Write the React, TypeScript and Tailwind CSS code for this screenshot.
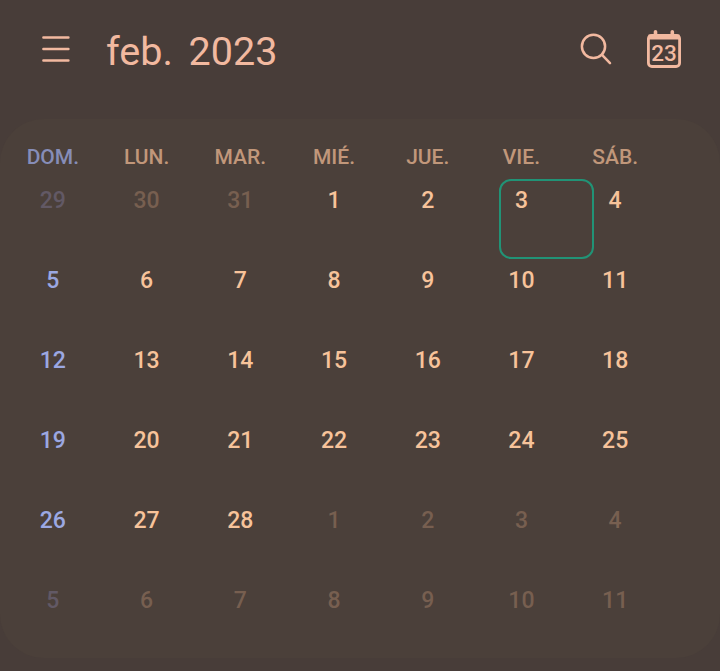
const weekdays = ['DOM.', 'LUN.', 'MAR.', 'MIÉ.', 'JUE.', 'VIE.', 'SÁB.'];

interface Day {
  value: number;
  outside: boolean;
}

const days: Day[] = [
  ...[29, 30, 31].map((value) => ({ value, outside: true })),
  ...Array.from({ length: 28 }, (_, i) => ({ value: i + 1, outside: false })),
  ...Array.from({ length: 11 }, (_, i) => ({ value: i + 1, outside: true })),
];

function dayColor(day: Day, index: number) {
  const isSunday = index % 7 === 0;
  if (isSunday) return day.outside ? 'text-[#625965]' : 'text-[#9ba8e2]';
  return day.outside ? 'text-[#775f50]' : 'text-[#f7c39a]';
}

function Header() {
  return (
    <header className="flex h-[119px] items-start pl-[42px] pr-[38px] text-[#f2b9a0]">
      <button aria-label="Menú" className="mt-[34px]">
        <svg className="h-[30px] w-[28px]" viewBox="0 0 28 30" fill="none" stroke="currentColor" strokeWidth={2.5} strokeLinecap="round">
          <path d="M1.4 3.6h25M1.4 15h25M1.4 26.4h25" />
        </svg>
      </button>
      <h1 className="ml-[36px] mt-[28px] text-[39.5px] leading-[48px] [word-spacing:6px]">feb. 2023</h1>
      <div className="ml-auto flex items-start">
        <button aria-label="Buscar" className="mt-[33px]">
          <svg className="h-8 w-8" viewBox="0 0 32 32" fill="none" stroke="currentColor" strokeWidth={2.5} strokeLinecap="round">
            <circle cx="13.5" cy="13.4" r="11.6" />
            <path d="M21.8 21.7l8.2 8.5" />
          </svg>
        </button>
        <button aria-label="Hoy" className="relative ml-[34px] mt-[30px] h-[39px] w-[36px]">
          <svg className="h-[39px] w-[36px]" viewBox="0 0 36 39" fill="none" stroke="currentColor">
            <rect x="2.4" y="5.3" width="31.2" height="31.2" rx="3.5" strokeWidth={2.8} />
            <path d="M2.5 7h31" strokeWidth={5} />
            <path d="M9.5 1.8v4M26.3 1.8v4" strokeWidth={3.6} strokeLinecap="round" />
          </svg>
          <span className="absolute inset-x-0 top-[11px] text-center text-[22.5px] font-medium leading-6">23</span>
        </button>
      </div>
    </header>
  );
}

export default function App() {
  return (
    <div className="h-[671px] w-[720px] overflow-hidden bg-[#483d39] font-['Roboto',sans-serif]">
      <Header />
      <main className="h-[539px] rounded-[44px] bg-[#4b403a] pl-[6px] pt-[25px]">
        <div className="grid w-[656px] grid-cols-7 text-center text-[21px] font-medium leading-[26px]">
          {weekdays.map((name, i) => (
            <div key={name} className={i === 0 ? 'text-[#868db8]' : 'text-[#c1977a]'}>
              {name}
            </div>
          ))}
        </div>
        <div className="mt-[9px] grid w-[656px] auto-rows-[80px] grid-cols-7 text-center text-[23px] font-medium">
          {days.map((day, i) => (
            <div key={i} className={`relative pt-[8px] leading-[28px] ${dayColor(day, i)}`}>
              {day.value}
              {i === 5 && (
                <span className="absolute left-[24px] top-0 h-[80px] w-[95px] rounded-[12px] border-2 border-[#219376]" />
              )}
            </div>
          ))}
        </div>
      </main>
    </div>
  );
}
